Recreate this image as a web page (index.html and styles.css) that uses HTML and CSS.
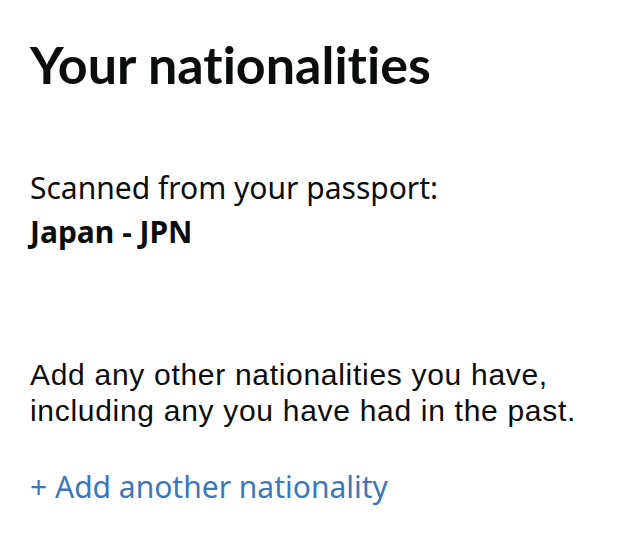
FILE: index.html
```html
<!DOCTYPE html>
<html>
<head>
	<meta name="viewport" content="width=device-width, initial-scale=1.0">
	<title>Your nationalities</title>
	<link rel="stylesheet" href="styles.css">
</head>
<body>

	<div id="page">
		<h1 class="heading">Your nationalities</h1>

		<div class="scanned">
			<p class="label">Scanned from your passport:</p>
			<p class="value">Japan - JPN</p>
		</div>

		<p class="hint">Add any other nationalities you have, including any you have had in the past.</p>

		<a class="addLink" href="#">+ Add another nationality</a>
	</div>

</body>
</html>
```

FILE: styles.css
```css
body{
	margin: 0;
	background-color: #ffffff;
	color: #0b0c0c;
}

#page{
	padding: 0 30px;
}

.heading{
	font-family: Lato, "Noto Sans", sans-serif;
	font-weight: 700;
	font-size: 52px;
	line-height: 60px;
	margin: 34px 0 0 0;
	font-variant-ligatures: none;
}

.scanned{
	margin-top: 72px;
	font-family: "Noto Sans", Lato, sans-serif;
	font-size: 30px;
	line-height: 44px;
	font-variant-ligatures: none;
}

.label{
	margin: 0;
}

.value{
	margin: 0;
	font-weight: 700;
}

.hint{
	font-family: "Liberation Sans", Arial, sans-serif;
	font-size: 30px;
	line-height: 36px;
	letter-spacing: 0.7px;
	margin: 103px 0 0 0;
	max-width: 570px;
}

.addLink{
	display: block;
	margin-top: 38px;
	font-family: "Noto Sans", Lato, sans-serif;
	font-size: 30px;
	line-height: 40px;
	color: #3a78bb;
	text-decoration: none;
	font-variant-ligatures: none;
}
```
